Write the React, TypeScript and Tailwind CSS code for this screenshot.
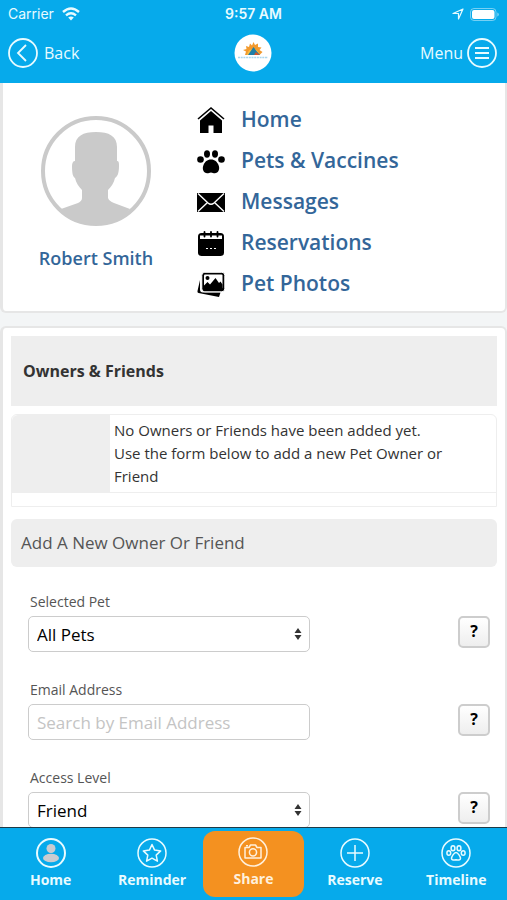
import type { ReactNode } from "react";

const menu: { label: string; icon: ReactNode }[] = [
  {
    label: "Home",
    icon: (
      <>
        <path d="M1 13 14 2l13 11" fill="none" stroke="currentColor" strokeWidth="1.6" />
        <path d="M3 14.500 14 5l11 9.500V27h-8.500v-7.500h-5V27H3z" />
      </>
    ),
  },
  {
    label: "Pets & Vaccines",
    icon: (
      <>
        <ellipse cx="3.500" cy="12.500" rx="3.300" ry="3.300" />
        <ellipse cx="10" cy="7" rx="3" ry="3.700" />
        <ellipse cx="18" cy="7" rx="3" ry="3.700" />
        <ellipse cx="24.500" cy="12.500" rx="3.300" ry="3.300" />
        <path d="M14 12.500c4 0 6 2.500 7.300 5 2.200 4.500 0 8.700-3.500 8.700-1.500 0-2.300-.8-3.800-.8s-2.300.8-3.800.8c-3.500 0-5.700-4.200-3.500-8.700 1.300-2.500 3.300-5 7.300-5z" />
      </>
    ),
  },
  {
    label: "Messages",
    icon: (
      <>
        <path d="M0 5h28v19H0z" />
        <path d="M1 5.500 11 15q3 2.600 6 0L27 5.500M1 23.500l9.500-9M27 23.500l-9.500-9" fill="none" stroke="#fff" strokeWidth="1.400" />
      </>
    ),
  },
  {
    label: "Reservations",
    icon: (
      <>
        <rect x="1" y="4" width="26" height="23" rx="3.500" />
        <path d="M3 6.500h22v3.500H3z" fill="#fff" />
        <path d="M7.500 3v4.500M14 3v4.500M20.500 3v4.500" stroke="currentColor" strokeWidth="1.800" strokeLinecap="round" />
        <path d="M9 19.500h2M13 19.500h2M17 19.500h2" stroke="#fff" strokeWidth="1.200" />
      </>
    ),
  },
  {
    label: "Pet Photos",
    icon: (
      <>
        <path d="M3 10v9.500q0 3 3 3h17.500l-1.500 4.500L1.500 23q-1.500-.5-1-2z" />
        <rect x="4.800" y="2.300" width="23" height="19.500" rx="3" stroke="#fff" strokeWidth="1" />
        <rect x="7" y="4.500" width="18.500" height="14" rx="1" fill="#fff" />
        <circle cx="10.500" cy="8" r="2" />
        <path d="M7 19v-3.500l3.500-3.500 2.500 2.500L18.500 8l3.500 5 1.500-1.500 2 3V19z" />
      </>
    ),
  },
];

const tabs: { label: string; icon: ReactNode; active?: boolean }[] = [
  {
    label: "Home",
    icon: (
      <>
        <g fill="#c9ccd1" stroke="none">
          <circle cx="15" cy="10.500" r="4.500" />
          <ellipse cx="15" cy="20" rx="8" ry="4.300" />
        </g>
        <circle cx="15" cy="15" r="14" strokeWidth="2" />
      </>
    ),
  },
  {
    label: "Reminder",
    icon: (
      <>
        <circle cx="15" cy="15" r="14" />
        <path d="m15 6.500 2.600 5.600 6.100.8-4.500 4.200 1.200 6.100-5.400-3-5.400 3 1.200-6.100-4.500-4.200 6.100-.8z" strokeLinejoin="round" />
      </>
    ),
  },
  {
    label: "Share",
    active: true,
    icon: (
      <>
        <circle cx="15" cy="15" r="14" />
        <path d="M7 10.500h4l1.500-2.500h5l1.500 2.500h4v10.500H7z" strokeLinejoin="round" />
        <circle cx="15" cy="15.300" r="3.600" />
        <path d="M8 8.700h2" />
      </>
    ),
  },
  {
    label: "Reserve",
    icon: (
      <>
        <circle cx="15" cy="15" r="14" />
        <path d="M15 7v16M7 15h16" />
      </>
    ),
  },
  {
    label: "Timeline",
    icon: (
      <>
        <circle cx="15" cy="15" r="14" />
        <ellipse cx="7.800" cy="15" rx="1.900" ry="2.300" />
        <ellipse cx="12" cy="10.300" rx="1.900" ry="2.500" />
        <ellipse cx="18" cy="10.300" rx="1.900" ry="2.500" />
        <ellipse cx="22.200" cy="15" rx="1.900" ry="2.300" />
        <path d="M15 14.500c2 0 4.500 4.500 4.500 6 0 2-2.500 1.700-4.500 1.200-2 .5-4.500.8-4.500-1.200 0-1.500 2.500-6 4.500-6z" />
      </>
    ),
  },
];

function StatusBar() {
  return (
    <div className="grid h-7 grid-cols-3 items-center px-2 text-sm leading-5 font-['Inter',sans-serif]">
      <div className="flex items-center gap-2">
        <span>Carrier</span>
        <svg viewBox="0 0 18 14" className="h-3.5 w-[18px]" fill="none" stroke="currentColor" strokeWidth="2.400">
          <path d="M1 5q8-7 16 0M4 8.300q5-4.200 10 0" />
          <path d="m9 13.500-2.800-3q2.800-2 5.600 0z" fill="currentColor" stroke="none" />
        </svg>
      </div>
      <div className="text-center font-semibold">9:57 AM</div>
      <div className="flex items-center justify-end gap-1.5">
        <svg viewBox="0 0 12 12" className="size-3" fill="none" stroke="currentColor" strokeWidth="1.200" strokeLinejoin="round">
          <path d="M11 1 1 5.500h5.500V11z" />
        </svg>
        <svg viewBox="0 0 29 13" className="h-[13px] w-[29px]">
          <rect x=".5" y=".5" width="25.500" height="12" rx="3.500" fill="none" stroke="#fff" strokeOpacity=".45" />
          <rect x="2" y="2" width="22.500" height="9" rx="2" fill="#fff" />
          <path d="M27.300 4.500v4q1.500-.5 1.500-2t-1.500-2z" fill="#fff" fillOpacity=".5" />
        </svg>
      </div>
    </div>
  );
}

function Header() {
  return (
    <header className="h-[83px] shrink-0 bg-[#06aaeb] text-[#e8fbff]">
      <StatusBar />
      <nav className="grid grid-cols-3 items-center pt-1.5 pr-2.5 pl-2 text-base">
        <button type="button" className="flex items-center gap-1.5">
          <svg viewBox="0 0 30 30" className="size-[30px]" fill="none" stroke="currentColor" strokeWidth="1.800">
            <circle cx="15" cy="15" r="14" />
            <path d="m18 7-8 8 8 8" />
          </svg>
          Back
        </button>
        <svg viewBox="0 0 38 38" className="size-[38px] justify-self-center">
          <circle cx="19" cy="19" r="18.500" fill="#fff" />
          <path d="m11 21 1-3.500-3-1.500 3.500-1-.5-3 3 1 1-3.500 2 2L19.500 8l1.500 3 3-1.500v3.500l3.500.5-2 2.500 3 2-3 3z" fill="#f29a2e" />
          <path d="M13 21q1-6 6-6t6.500 6z" fill="#f6c045" />
          <path d="m14 21 5.500-8 3 4 3.500 4z" fill="#1f7fa8" />
          <path d="m20 21 2-3 3.500 3z" fill="#d4532b" />
          <path d="M4 23.500h30" stroke="#a9d6ee" strokeWidth="1.500" strokeDasharray="2 .7" />
        </svg>
        <button type="button" className="flex items-center gap-1 justify-self-end">
          Menu
          <svg viewBox="0 0 30 30" className="size-[30px]" fill="none" stroke="currentColor" strokeWidth="1.800">
            <circle cx="15" cy="15" r="14" />
            <path d="M8 10h14M8 15h14M8 20h14" />
          </svg>
        </button>
      </nav>
    </header>
  );
}

function Field({ id, label, children }: { id: string; label: string; children: ReactNode }) {
  return (
    <div className="h-[88px] pl-[17px] pr-[7px]">
      <label htmlFor={id} className="block pl-0.5 text-sm leading-5 text-[#555]">
        {label}
      </label>
      <div className="mt-1 flex items-start justify-between">
        <div className="relative w-[61%]">{children}</div>
        <button
          type="button"
          aria-label={`Help: ${label}`}
          className="h-8 w-8 rounded-[5px] border-2 border-[#cdcdcd] bg-linear-to-b from-white to-[#eee] pb-0.5 text-base leading-6 font-bold text-black"
        >
          ?
        </button>
      </div>
    </div>
  );
}

function SelectBox({ id, option }: { id: string; option: string }) {
  return (
    <>
      <select id={id} className="h-9 w-full appearance-none rounded-[5px] border border-[#ccc] bg-white px-2 pt-0.5 text-[17px] text-black">
        <option>{option}</option>
      </select>
      <svg viewBox="0 0 8 12" className="pointer-events-none absolute top-3 right-2 h-3 w-2" fill="#333">
        <path d="m4 0 3.500 5h-7zM4 12l3.500-5h-7z" />
      </svg>
    </>
  );
}

export default function App() {
  return (
    <div className="flex h-screen flex-col overflow-hidden bg-[#f3f5f6] font-['Open_Sans',sans-serif] text-[#333]">
      <Header />
      <main className="min-h-0 flex-1 overflow-hidden">
        <section className="flex rounded-b-md border-r-2 border-b-2 border-l-[3px] border-[#e6e6e6] bg-white pt-4 pb-[7px]">
          <div className="flex w-[186px] shrink-0 flex-col items-center pt-[17px]">
            <svg viewBox="0 0 110 110" className="size-[110px]">
              <circle cx="55" cy="55" r="53" fill="#fff" stroke="#cacaca" strokeWidth="4" />
              <path
                d="M34 31C34 20 42 16 55 16s21 4 21 15v14c2 0 2 2 2 5 0 8-2 11-4 12-1 5-4 9-7 12v8q1 3 6 5l16 6q-12 16-34 16T20 93l17-6q4-2 4-5v-8c-3-3-6-7-7-12-2-1-3-4-3-12 0-3 1-5 3-5z"
                fill="#cacaca"
              />
            </svg>
            <a href="#profile" className="mt-5 text-lg leading-6 font-semibold text-[#336699]">
              Robert Smith
            </a>
          </div>
          <ul>
            {menu.map((m) => (
              <li key={m.label}>
                <a href={"#" + m.label} className="flex h-[41px] items-center gap-4 pl-2 text-[21px] font-semibold text-[#336699]">
                  <svg viewBox="0 0 28 28" className="size-7 text-black" fill="currentColor">
                    {m.icon}
                  </svg>
                  {m.label}
                </a>
              </li>
            ))}
          </ul>
        </section>

        <section className="mt-[13px] rounded-t-md border-t-2 border-r-2 border-l-[3px] border-[#e6e6e6] bg-white px-2 pt-2">
          <h2 className="flex h-[70px] items-center bg-[#eee] px-3 text-base font-bold">Owners &amp; Friends</h2>
          <table className="mt-2 w-full border-separate border-spacing-0 rounded-t-md border border-[#eee]">
            <tbody>
              <tr>
                <td className="w-[98px] rounded-tl-md bg-[#eee]" />
                <td className="border-b border-[#eee] py-1 pr-4 pl-1 text-[15px] leading-[23px]">
                  No Owners or Friends have been added yet.
                  <br />
                  Use the form below to add a new Pet Owner or <br />
                  Friend
                </td>
              </tr>
              <tr>
                <td colSpan={2} className="h-[13px]" />
              </tr>
            </tbody>
          </table>
          <h3 className="mt-3 flex h-12 items-center rounded-md bg-[#eee] px-2.5 text-[17px] text-[#555]">Add A New Owner Or Friend</h3>
          <form className="pt-[25px]">
            <Field id="pet" label="Selected Pet">
              <SelectBox id="pet" option="All Pets" />
            </Field>
            <Field id="email" label="Email Address">
              <input
                id="email"
                type="email"
                placeholder="Search by Email Address"
                className="h-9 w-full rounded-[5px] border border-[#ccc] px-2 text-[17px] placeholder:text-[#c4c4c4]"
              />
            </Field>
            <Field id="access" label="Access Level">
              <SelectBox id="access" option="Friend" />
            </Field>
          </form>
        </section>
      </main>
      <footer className="h-[73px] shrink-0 border-t border-[#1c3a48] bg-[#06aaeb] pt-[3px]">
        <nav className="grid grid-cols-5 text-[#e8fbff]">
          {tabs.map((t) => (
            <a
              key={t.label}
              href={"#tab-" + t.label}
              className={
                t.active
                  ? "flex h-[66px] flex-col items-center rounded-xl bg-[#f49120] pt-1.5 text-sm leading-6 font-bold text-[#fff0dc]"
                  : "flex h-[66px] flex-col items-center pt-[7px] text-sm leading-6 font-bold"
              }
            >
              <svg viewBox="0 0 30 30" className="size-[30px]" fill="none" stroke="currentColor" strokeWidth="1.500">
                {t.icon}
              </svg>
              {t.label}
            </a>
          ))}
        </nav>
      </footer>
    </div>
  );
}
